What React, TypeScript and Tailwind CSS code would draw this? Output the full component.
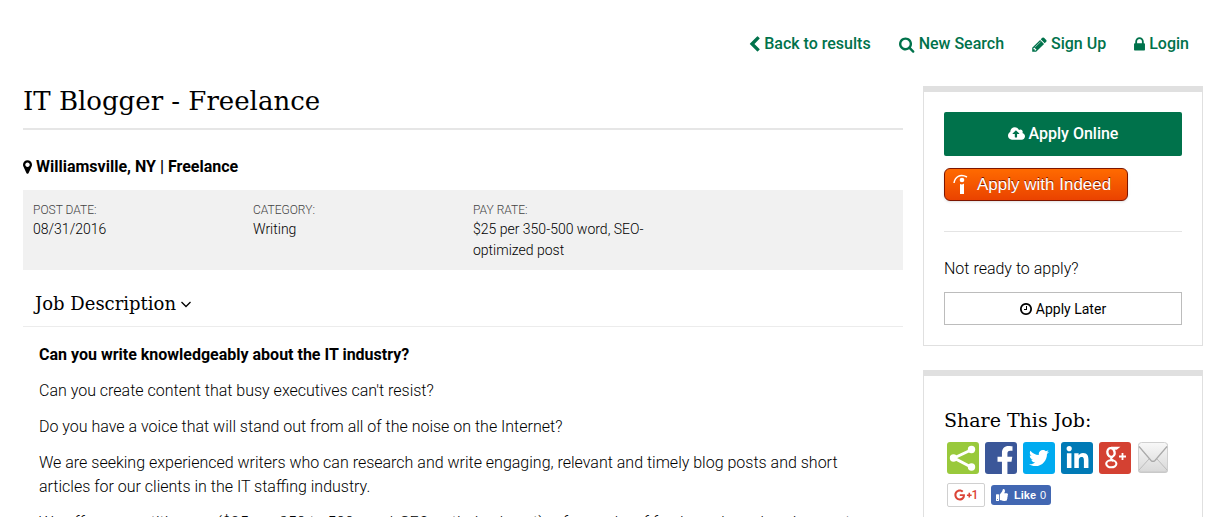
import React from 'react'
import { FaFacebookF, FaGooglePlusG, FaLinkedinIn, FaThumbsUp, FaTwitter } from 'react-icons/fa'

const ICONS = {
  chevronLeft:
    'M1427 301l-531 531 531 531q19 19 19 45t-19 45l-166 166q-19 19-45 19t-45-19l-742-742q-19-19-19-45t19-45l742-742q19-19 45-19t45 19l166 166q19 19 19 45t-19 45z',
  search:
    'M1216 832q0-185-131.5-316.5t-316.5-131.5-316.5 131.5-131.5 316.5 131.5 316.5 316.5 131.5 316.5-131.5 131.5-316.5zm512 832q0 52-38 90t-90 38q-54 0-90-38l-343-342q-179 124-399 124-143 0-273.5-55.5t-225-150-150-225-55.5-273.5 55.5-273.5 150-225 225-150 273.5-55.5 273.5 55.5 225 150 150 225 55.5 273.5q0 220-124 399l343 343q37 37 37 90z',
  pencil:
    'M491 1536l91-91-235-235-91 91v107h128v128h107zm523-928q0-22-22-22-10 0-17 7l-542 542q-7 7-7 17 0 22 22 22 10 0 17-7l542-542q7-7 7-17zm-54-192l416 416-832 832h-416v-416zm683 96q0 53-37 90l-166 166-416-416 166-165q36-38 90-38 53 0 91 38l235 234q37 39 37 91z',
  lock:
    'M640 768h512v-192q0-106-75-181t-181-75-181 75-75 181v192zm832 96v576q0 40-28 68t-68 28h-960q-40 0-68-28t-28-68v-576q0-40 28-68t68-28h32v-192q0-184 132-316t316-132 316 132 132 316v192h32q40 0 68 28t28 68z',
  marker:
    'M1152 640q0-106-75-181t-181-75-181 75-75 181 75 181 181 75 181-75 75-181zm256 0q0 109-33 179l-364 774q-16 33-47.5 52t-67.5 19-67.5-19-46.5-52l-365-774q-33-70-33-179 0-212 150-362t362-150 362 150 150 362z',
  cloudUpload:
    'M1216 864q0-14-9-23l-352-352q-9-9-23-9t-23 9l-351 351q-10 12-10 24 0 14 9 23t23 9h224v352q0 13 9.5 22.5t22.5 9.5h192q13 0 22.5-9.5t9.5-22.5v-352h224q13 0 22.5-9.5t9.5-22.5zm640 288q0 159-112.5 271.5t-271.5 112.5h-1088q-185 0-316.5-131.5t-131.5-316.5q0-130 70-240t188-165q-2-30-2-43 0-212 150-362t362-150q156 0 285.5 87t188.5 231q71-62 166-62 106 0 181 75t75 181q0 76-41 138 130 31 213.5 135.5t83.5 238.5z',
  clock:
    'M1024 544v448q0 14-9 23t-23 9h-320q-14 0-23-9t-9-23v-64q0-14 9-23t23-9h224v-352q0-14 9-23t23-9h64q14 0 23 9t9 23zm416 352q0-148-73-273t-198-198-273-73-273 73-198 198-73 273 73 273 198 198 273 73 273-73 198-198 73-273zm224 0q0 209-103 385.5t-279.5 279.5-385.5 103-385.5-103-279.5-279.5-103-385.5 103-385.5 279.5-279.5 385.5-103 385.5 103 279.5 279.5 103 385.5z',
}

interface IconProps {
  name: keyof typeof ICONS
  viewBox?: string
  className?: string
}

function Icon({ name, viewBox = '0 0 1792 1792', className = '' }: IconProps) {
  return (
    <svg viewBox={viewBox} fill="currentColor" className={`flex-shrink-0 ${className}`} aria-hidden="true">
      <path d={ICONS[name]} />
    </svg>
  )
}

const NAV_LINKS: (IconProps & { label: string })[] = [
  { name: 'chevronLeft', label: 'Back to results', viewBox: '340 0 1120 1792', className: 'h-[17px] w-[11px]' },
  { name: 'search', label: 'New Search', viewBox: '64 0 1728 1792', className: 'h-[17px] w-4' },
  { name: 'pencil', label: 'Sign Up', viewBox: '128 0 1536 1792', className: 'h-[17px] w-[15px]' },
  { name: 'lock', label: 'Login', viewBox: '320 0 1152 1792', className: 'h-[17px] w-[11px]' },
]

const JOB_FACTS = [
  { label: 'Post Date:', value: '08/31/2016' },
  { label: 'Category:', value: 'Writing' },
  { label: 'Pay Rate:', value: '$25 per 350-500 word, SEO-optimized post' },
]

const PARAGRAPHS = [
  "Can you create content that busy executives can't resist?",
  'Do you have a voice that will stand out from all of the noise on the Internet?',
  'We are seeking experienced writers who can research and write engaging, relevant and timely blog posts and short articles for our clients in the IT staffing industry.',
  'We offer competitive pay ($25 per 350 to 500 word, SEO-optimized post), a few perks of freelance based assignments and',
]

function ShareGlyph() {
  return (
    <svg viewBox="0 0 32 32" className="h-8 w-8" aria-hidden="true">
      <path d="M24 8L7 16l17 9" fill="none" stroke="#fff" strokeWidth="3" />
      <circle cx="24.500" cy="7.500" r="3.700" fill="#fff" />
      <circle cx="6.500" cy="16" r="3.700" fill="#fff" />
      <circle cx="24.500" cy="25" r="3.700" fill="#fff" />
    </svg>
  )
}

function GooglePlusGlyph() {
  return (
    <svg viewBox="0 0 32 32" className="h-8 w-8" fill="none" stroke="#fff" aria-hidden="true">
      <ellipse cx="12" cy="10.500" rx="3.600" ry="4.400" strokeWidth="2.400" transform="rotate(-12 12 10.500)" />
      <path d="M12 5.500h7.500l-2 1.500h-2.500" strokeWidth="1.300" fill="#fff" />
      <path d="M13.500 14.800c-2.500 1.700-1.400 2.600.6 4" strokeWidth="2.200" />
      <ellipse cx="12.300" cy="21.800" rx="5.100" ry="3.500" strokeWidth="2.100" />
      <path d="M20 14.500h7M23.500 11v7" strokeWidth="1.800" />
    </svg>
  )
}

function MailGlyph() {
  return (
    <svg viewBox="0 0 32 32" className="h-8 w-8" aria-hidden="true">
      <defs>
        <linearGradient id="mail" x1="0" y1="0" x2="0" y2="1">
          <stop offset="0" stopColor="#f8f8f8" />
          <stop offset="1" stopColor="#d9d9d9" />
        </linearGradient>
      </defs>
      <rect x="1" y="1" width="30" height="30" rx="3" fill="#c9c9c9" />
      <rect x="1.500" y=".5" width="29" height="29" rx="3" fill="url(#mail)" stroke="#d0d0d0" />
      <path d="M2 28l10-11M30 28L20 17" stroke="#bcbcbc" fill="none" />
      <path d="M2 4.500l12 14q2 2 4 0l12-14" stroke="#a9a9a9" strokeWidth="1.200" fill="none" />
    </svg>
  )
}

const SHARE_LINKS = [
  { label: 'Share', bg: 'bg-[#99c93c]', glyph: <ShareGlyph /> },
  { label: 'Facebook', bg: 'bg-[#3b5799]', glyph: <FaFacebookF className="mt-1 ml-2 h-7 w-[22px]" /> },
  { label: 'Twitter', bg: 'bg-[#00abf0]', glyph: <FaTwitter className="h-5 w-5" /> },
  { label: 'LinkedIn', bg: 'bg-[#007ab6]', glyph: <FaLinkedinIn className="h-[25px] w-[25px]" /> },
  { label: 'Google Plus', bg: 'bg-[#d44132]', glyph: <GooglePlusGlyph /> },
  { label: 'Email', bg: 'bg-white', glyph: <MailGlyph /> },
]

export default function App() {
  return (
    <div className="h-screen overflow-hidden bg-white pr-4 pl-[23px] font-['Roboto','Liberation_Sans',sans-serif] text-base font-light text-black">
      <nav className="flex justify-end gap-7 pt-8 pr-[14px] font-medium text-[#00724b]">
        {NAV_LINKS.map(({ label, ...icon }) => (
          <a key={label} href="#" className="flex items-center gap-1">
            <Icon {...icon} />
            {label}
          </a>
        ))}
      </nav>

      <div className="mt-[30px] flex items-start gap-5">
        <main className="min-w-0 flex-1">
          <h1 className="border-b-2 border-[#e6e6e6] pb-3 font-['DejaVu_Serif',serif] text-[26px] leading-[30px] font-normal">
            IT Blogger - Freelance
          </h1>
          <p className="mt-[25px] flex items-center gap-1 font-bold">
            <Icon name="marker" viewBox="384 0 1024 1792" className="h-4 w-[9px]" />
            Williamsville, NY | Freelance
          </p>

          <dl className="mt-[11px] grid grid-cols-4 bg-[#f1f1f1] pt-[11px] pb-[9px] text-sm">
            {JOB_FACTS.map((fact) => (
              <div key={fact.label} className="px-[10px]">
                <dt className="text-xs leading-[18px] text-[#444] uppercase">{fact.label}</dt>
                <dd className="leading-[21px]">{fact.value}</dd>
              </div>
            ))}
          </dl>

          <h2 className="border-b border-[#ececec] pt-5 pb-2 pl-3 font-['DejaVu_Serif',serif] text-[18px] leading-7 font-normal">
            <button type="button" className="flex items-center gap-1">
              Job Description
              <svg viewBox="0 0 12 12" className="h-3 w-3" fill="none" stroke="currentColor" strokeWidth="1.300" aria-hidden="true">
                <path d="M1.500 4l4.500 4.500 4.500-4.500" />
              </svg>
            </button>
          </h2>

          <div className="flex flex-col gap-3 px-4 pt-4">
            <p className="font-bold">Can you write knowledgeably about the IT industry?</p>
            {PARAGRAPHS.map((text) => (
              <p key={text}>{text}</p>
            ))}
          </div>
        </main>

        <aside className="flex w-[280px] flex-shrink-0 flex-col gap-6">
          <section className="border border-t-[6px] border-[#e0e0e0] p-5">
            <button
              type="button"
              className="flex h-11 w-full items-center justify-center gap-1 rounded-xs bg-[#00724b] font-medium text-white"
            >
              <Icon name="cloudUpload" viewBox="-64 0 1920 1792" className="h-4 w-[17px]" />
              Apply Online
            </button>
            <button
              type="button"
              className="mt-3 flex h-[33px] items-center gap-2 rounded-md border border-[#7c1500] bg-linear-to-b from-[#ff6a00] to-[#ea4200] pr-4 pl-2 font-['Liberation_Sans',sans-serif] text-[17px] font-normal text-white shadow-sm text-shadow-[0_-1px_0_#7c1500]"
            >
              <svg viewBox="0 0 16 22" className="h-[22px] w-4" aria-hidden="true">
                <path d="M1 9C2 3 7-.5 14 3" fill="none" stroke="#fff" strokeWidth="1.500" />
                <circle cx="9" cy="6" r="2.300" fill="#fff" />
                <path d="M7 10q2 1 4-.5V20H7z" fill="#fff" />
              </svg>
              Apply with Indeed
            </button>
            <div className="mt-[30px] border-t border-[#e4e4e4] pt-[25px]">
              <p>Not ready to apply?</p>
              <button
                type="button"
                className="mt-[11px] flex h-[33px] w-full items-center justify-center gap-1 border border-[#bcbcbc] text-sm font-normal"
              >
                <Icon name="clock" viewBox="128 0 1536 1792" className="h-[14px] w-3" />
                Apply Later
              </button>
            </div>
          </section>

          <section className="border border-t-[6px] border-[#e0e0e0] p-5 pt-7">
            <h2 className="font-['DejaVu_Serif',serif] text-[19px] leading-8 font-normal">Share This Job:</h2>
            <div className="mt-[6px] flex gap-[6px] pl-[3px]">
              {SHARE_LINKS.map((link) => (
                <a
                  key={link.label}
                  href="#"
                  aria-label={link.label}
                  className={`flex h-8 w-8 items-center justify-center overflow-hidden rounded-[3px] text-white ${link.bg}`}
                >
                  {link.glyph}
                </a>
              ))}
            </div>
            <div className="mt-[9px] flex items-center gap-[6px] pl-[3px]">
              <button
                type="button"
                className="flex h-6 w-[38px] items-center justify-center rounded-xs border border-[#d0d0d0] text-xs font-medium text-[#db4437]"
              >
                <FaGooglePlusG className="h-[18px] w-[18px]" />1
              </button>
              <button
                type="button"
                className="flex h-5 items-center gap-1 rounded-[3px] bg-[#4267b2] px-[5px] font-['Liberation_Sans',sans-serif] text-[11px] font-bold text-white"
              >
                <FaThumbsUp className="mr-[2px] h-3 w-3" />
                Like <span className="font-normal">0</span>
              </button>
            </div>
          </section>
        </aside>
      </div>
    </div>
  )
}
